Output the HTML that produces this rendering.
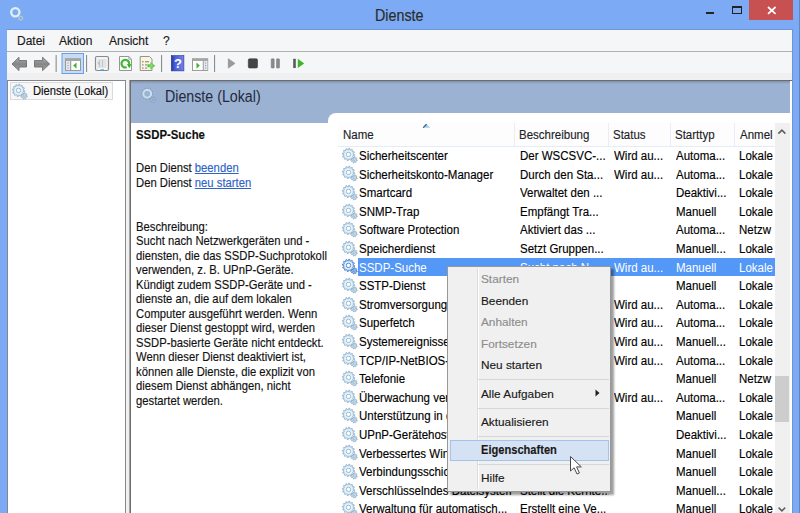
<!DOCTYPE html>
<html><head><meta charset="utf-8">
<style>
*{box-sizing:border-box}
html,body{margin:0;padding:0}
body{width:800px;height:513px;overflow:hidden;position:relative;background:#7caaf5;font-family:"Liberation Sans",sans-serif;font-size:12px;color:#000}
.a{position:absolute}
.t{position:absolute;white-space:nowrap;line-height:14px;-webkit-text-stroke:0.15px currentColor}
#title{left:375px;top:6.5px;font-size:15.8px;line-height:18px;color:#2b2b2b;transform-origin:0 0;transform:scaleX(0.905)}
#client{left:7px;top:29px;width:785px;height:484px;background:#f0f0f0}
#menubar{left:7px;top:29px;width:785px;height:22px;background:#f5f6f7;border-top:1px solid #6e95d8}
#menusep{left:7px;top:51px;width:785px;height:1px;background:#b0b0b0}
#toolbar{left:7px;top:52px;width:785px;height:21px;background:#f5f6f7}
.mi{top:33.5px;font-size:12px;color:#1a1a1a}
.tsep{width:1px;height:17px;top:55px;background:#8a8a8a}
#lp{left:7px;top:80px;width:119px;height:440px;background:#fff;border:1px solid #828790}
#rp{left:130px;top:80px;width:662px;height:440px;background:#fff;border-left:1px solid #6c6c6c;border-top:1px solid #6c6c6c}
#hdr{left:131px;top:81px;width:659px;height:42px;background:#9cb2d3}
#tab{left:328px;top:113px;width:462px;height:20px;background:#fff;border-top-left-radius:8px}
.desc{left:136px;font-size:12.6px;color:#111;transform-origin:0 0;transform:scaleX(0.894)}
.link{color:#2e63c7;text-decoration:underline}
#lh{left:338px;top:123px;width:437px;height:24px;background:#fdfdfd;border-bottom:1px solid #e4ecf6}
.csep{top:123px;width:1px;height:23px;background:#e8eef8}
.hc{top:127.6px;font-size:12.5px;color:#1e1e2a;transform-origin:0 0;transform:scaleX(0.92)}
.row{left:338px;width:437px;height:18.5px}
.rc{font-size:12.5px;color:#000;transform-origin:0 0;transform:scaleX(0.92)}
#sb{left:775px;top:123px;width:15px;height:390px;background:#f0f0f0}
#thumb{left:775px;top:376px;width:14px;height:46px;background:#cdcdcd}
#ctx{left:447px;top:266px;width:164px;height:226px;background:#f0f0f0;border:1px solid #979797;box-shadow:3px 3px 2px rgba(0,0,0,0.38)}
.ci{left:481px;font-size:11.8px;color:#1a1a1a;letter-spacing:0}
.dis{color:#8d8d8d}
.msep{left:478px;width:131px;height:1px;background:#d7d7d7}
</style></head>
<body>
<!-- title bar -->
<svg class="a" style="left:0;top:0" width="30" height="26" viewBox="0 0 30 26">
 <path d="M23.10 18.20L23.79 18.38L23.63 19.18L22.92 19.08L22.43 19.83L22.79 20.44L22.11 20.90L21.68 20.32L20.80 20.50L20.62 21.19L19.82 21.03L19.92 20.32L19.17 19.83L18.56 20.19L18.10 19.51L18.68 19.08L18.50 18.20L17.81 18.02L17.97 17.22L18.68 17.32L19.17 16.57L18.81 15.96L19.49 15.50L19.92 16.08L20.80 15.90L20.98 15.21L21.78 15.37L21.68 16.08L22.43 16.57L23.04 16.21L23.50 16.89L22.92 17.32ZM21.90 18.20A1.1 1.1 0 1 0 19.70 18.20A1.1 1.1 0 1 0 21.90 18.20Z" fill="#c6dcee" stroke="#8fa9c8" stroke-width="0.6" fill-rule="evenodd" opacity="0.9"/>
 <path d="M20.40 12.30L21.50 12.54L21.35 13.67L20.23 13.62L19.72 14.85L20.54 15.61L19.85 16.51L18.91 15.91L17.85 16.72L18.19 17.79L17.14 18.22L16.62 17.23L15.30 17.40L15.06 18.50L13.93 18.35L13.98 17.23L12.75 16.72L11.99 17.54L11.09 16.85L11.69 15.91L10.88 14.85L9.81 15.19L9.38 14.14L10.37 13.62L10.20 12.30L9.10 12.06L9.25 10.93L10.37 10.98L10.88 9.75L10.06 8.99L10.75 8.09L11.69 8.69L12.75 7.88L12.41 6.81L13.46 6.38L13.98 7.37L15.30 7.20L15.54 6.10L16.67 6.25L16.62 7.37L17.85 7.88L18.61 7.06L19.51 7.75L18.91 8.69L19.72 9.75L20.79 9.41L21.22 10.46L20.23 10.98ZM18.30 12.30A3.0 3.0 0 1 0 12.30 12.30A3.0 3.0 0 1 0 18.30 12.30Z" fill="#94aed0" fill-rule="evenodd"/>
 <circle cx="15.3" cy="12.3" r="4.1" fill="none" stroke="#dcf0fa" stroke-width="2.3"/>
</svg>
<div id="title" class="t">Dienste</div>
<div class="a" style="left:706px;top:11.5px;width:8px;height:2px;background:#222"></div>
<div class="a" style="left:731.5px;top:6px;width:10px;height:8px;border:1px solid #222;border-top-width:2px"></div>
<div class="a" style="left:749px;top:0;width:44px;height:19.5px;background:#c75050"></div>
<svg class="a" style="left:760px;top:0" width="24" height="20" viewBox="760 0 24 20"><path d="M768 7L775.6 13.8M775.6 7L768 13.8" stroke="#fff" stroke-width="1.7"/></svg>

<div class="a" style="left:799px;top:0;width:1px;height:513px;background:#5f86c6"></div>
<div class="a" style="left:792px;top:29px;width:1px;height:484px;background:#6b94d8"></div>
<div id="client" class="a"></div>
<div id="menubar" class="a"></div>
<div id="menusep" class="a"></div>
<div id="toolbar" class="a"></div>
<div class="t mi" style="left:17px">Datei</div>
<div class="t mi" style="left:59px">Aktion</div>
<div class="t mi" style="left:109px">Ansicht</div>
<div class="t mi" style="left:163px">?</div>

<svg class="a" style="left:0;top:0" width="320" height="80" viewBox="0 0 320 80">
 <defs>
  <linearGradient id="ga" x1="0" y1="0" x2="0" y2="1"><stop offset="0" stop-color="#b8b8b8"/><stop offset="0.5" stop-color="#858585"/><stop offset="1" stop-color="#a8a8a8"/></linearGradient>
  <linearGradient id="gh" x1="0" y1="0" x2="1" y2="0"><stop offset="0" stop-color="#2536a0"/><stop offset="0.3" stop-color="#4a5fd8"/><stop offset="1" stop-color="#6f82e6"/></linearGradient>
  <radialGradient id="gg" cx="0.5" cy="0.5" r="0.5"><stop offset="0" stop-color="#8ee37a"/><stop offset="1" stop-color="#3cb82e"/></radialGradient>
 </defs>
 <!-- back/forward -->
 <path d="M12 64L19 57.3L19 60.6L26.5 60.6L26.5 67L19 67L19 70.6Z" fill="url(#ga)" stroke="#6c6c6c" stroke-width="0.9" stroke-linejoin="round"/>
 <path d="M49.6 64L42.6 57.3L42.6 60.6L34.5 60.6L34.5 67L42.6 67L42.6 70.6Z" fill="url(#ga)" stroke="#6c6c6c" stroke-width="0.9" stroke-linejoin="round"/>
 <rect x="55.6" y="55" width="1.1" height="17" fill="#8c8c8c"/>
 <!-- pressed button -->
 <rect x="62" y="53.5" width="21.5" height="20" fill="#c6dcf5" stroke="#6a9ee6" stroke-width="1"/>
 <rect x="65.5" y="58.8" width="15" height="11.6" fill="#fff" stroke="#8e8e8e" stroke-width="0.9"/>
 <rect x="65.5" y="58.8" width="15" height="2.2" fill="#a6a6a6"/>
 <rect x="66" y="61" width="4.2" height="9" fill="#e8e8e8"/>
 <rect x="70.2" y="61" width="1" height="9.4" fill="#8a8a8a"/>
 <rect x="67.4" y="62.5" width="1.2" height="1" fill="#7a9bd0"/><rect x="67.4" y="65" width="1.2" height="1" fill="#7a9bd0"/><rect x="67.4" y="67.5" width="1.2" height="1" fill="#7a9bd0"/>
 <path d="M76.5 62.5L73.2 65.6L76.5 68.8Z" fill="#3fb02f"/>
 <rect x="86" y="55" width="1.1" height="17" fill="#8c8c8c"/>
 <!-- properties -->
 <rect x="95.5" y="56.5" width="13" height="14" rx="1.5" fill="#f4f4f4" stroke="#8a8a8a" stroke-width="1.2"/>
 <rect x="97.5" y="59" width="9" height="9" fill="#e4e4e4"/>
 <rect x="99" y="60" width="1" height="7" fill="#c4c4c4"/><rect x="102" y="60" width="1" height="7" fill="#c4c4c4"/>
 <rect x="97.8" y="62" width="1.2" height="2.5" fill="#8fd0f4"/>
 <rect x="100.5" y="69.3" width="3.5" height="1.3" fill="#36aee8"/>
 <!-- refresh doc -->
 <path d="M119.5 56.5L128.8 56.5L131.5 59.2L131.5 70.5L119.5 70.5Z" fill="#fdfdfd" stroke="#8a8a8a" stroke-width="0.9"/>
 <path d="M128.8 56.5L128.8 59.2L131.5 59.2" fill="none" stroke="#9a9a9a" stroke-width="0.8"/>
  <path d="M126.7 67.2A3.8 3.8 0 1 1 129.1 64.2" fill="none" stroke="url(#gg)" stroke-width="2.3"/>
 <path d="M131.4 64.2L126.9 64.0L129.3 68.2Z" fill="#2fae1f"/>
 <!-- export list -->
 <path d="M140.2 56.5L149.5 56.5L152 59L152 70.5L140.2 70.5Z" fill="#fbf6d9" stroke="#8a8a8a" stroke-width="0.9"/>
 <rect x="142" y="61" width="1.6" height="1.4" fill="#999"/><rect x="145" y="61" width="4" height="1.4" fill="#9a9ab0"/>
 <rect x="142" y="64.2" width="1.6" height="1.4" fill="#999"/><rect x="145" y="64.2" width="2" height="1.4" fill="#9a9ab0"/>
 <rect x="142" y="67.4" width="1.6" height="1.4" fill="#999"/><rect x="145" y="67.4" width="2" height="1.4" fill="#9a9ab0"/>
 <path d="M147.5 64.2L150.5 64.2L150.5 62L155.2 65.7L150.5 69.4L150.5 67.2L147.5 67.2Z" fill="url(#gg)"/>
 <rect x="161" y="55" width="1.1" height="17" fill="#8c8c8c"/>
 <!-- help -->
 <rect x="171.3" y="55.6" width="12.6" height="15.3" fill="url(#gh)" stroke="#2a3490" stroke-width="0.6"/>
 <text x="177.9" y="68.4" font-family="Liberation Sans" font-size="13" font-weight="bold" fill="#fff" text-anchor="middle">?</text>
 <!-- action pane -->
 <rect x="192.5" y="58.8" width="15.2" height="11.6" fill="#fff" stroke="#8e8e8e" stroke-width="0.9"/>
 <rect x="192.5" y="58.8" width="15.2" height="2.2" fill="#a6a6a6"/>
 <rect x="202.8" y="61" width="1" height="9.4" fill="#8a8a8a"/>
 <rect x="203.8" y="61" width="3.6" height="9" fill="#e8e8e8"/>
 <rect x="205" y="62.5" width="1.2" height="1" fill="#7a9bd0"/><rect x="205" y="65" width="1.2" height="1" fill="#7a9bd0"/><rect x="205" y="67.5" width="1.2" height="1" fill="#7a9bd0"/>
 <path d="M196.5 62.5L199.8 65.6L196.5 68.8Z" fill="#3fb02f"/>
 <rect x="214" y="55" width="1.1" height="17" fill="#8c8c8c"/>
 <!-- play/stop/pause/restart -->
 <path d="M228.3 58.7L235 63.4L228.3 68.1Z" fill="#9a9a9a" stroke="#8a8a8a" stroke-width="0.6"/>
 <rect x="248.3" y="58.8" width="9.2" height="9.2" rx="1.3" fill="#444" stroke="#3a3a3a" stroke-width="0.6"/>
 <rect x="271.2" y="58.8" width="3" height="9.2" rx="0.6" fill="#8a8a8a" stroke="#777" stroke-width="0.5"/>
 <rect x="276.5" y="58.8" width="3" height="9.2" rx="0.6" fill="#8a8a8a" stroke="#777" stroke-width="0.5"/>
 <rect x="293.2" y="58.8" width="2.6" height="9.2" rx="0.5" fill="#5a5a5a"/>
 <path d="M297.8 58.7L304.2 63.4L297.8 68.1Z" fill="#3cb52b"/>
</svg>


<!-- left pane -->
<div id="lp" class="a"></div>
<div class="a" style="left:10px;top:82px;width:102.5px;height:18px;border:1px solid #dadada;background:#f7f7f7"></div>
<svg class="a" style="left:12px;top:82.5px" width="16" height="17" viewBox="0 0 16 17"><path d="M14.50 12.80L15.29 12.98L15.13 13.82L14.32 13.68L13.83 14.43L14.26 15.12L13.55 15.59L13.08 14.92L12.20 15.10L12.02 15.89L11.18 15.73L11.32 14.92L10.57 14.43L9.88 14.86L9.41 14.15L10.08 13.68L9.90 12.80L9.11 12.62L9.27 11.78L10.08 11.92L10.57 11.17L10.14 10.48L10.85 10.01L11.32 10.68L12.20 10.50L12.38 9.71L13.22 9.87L13.08 10.68L13.83 11.17L14.52 10.74L14.99 11.45L14.32 11.92ZM13.20 12.80A1.0 1.0 0 1 0 11.20 12.80A1.0 1.0 0 1 0 13.20 12.80Z" fill="#cce8f7" stroke="#86a3c0" stroke-width="0.7" fill-rule="evenodd"/><path d="M11.40 7.40L12.70 7.64L12.55 8.77L11.23 8.67L10.74 9.85L11.74 10.71L11.05 11.61L9.96 10.86L8.95 11.64L9.39 12.89L8.34 13.32L7.77 12.13L6.50 12.30L6.26 13.60L5.13 13.45L5.23 12.13L4.05 11.64L3.19 12.64L2.29 11.95L3.04 10.86L2.26 9.85L1.01 10.29L0.58 9.24L1.77 8.67L1.60 7.40L0.30 7.16L0.45 6.03L1.77 6.13L2.26 4.95L1.26 4.09L1.95 3.19L3.04 3.94L4.05 3.16L3.61 1.91L4.66 1.48L5.23 2.67L6.50 2.50L6.74 1.20L7.87 1.35L7.77 2.67L8.95 3.16L9.81 2.16L10.71 2.85L9.96 3.94L10.74 4.95L11.99 4.51L12.42 5.56L11.23 6.13ZM8.70 7.40A2.2 2.2 0 1 0 4.30 7.40A2.2 2.2 0 1 0 8.70 7.40Z" fill="#cce8f7" stroke="#86a3c0" stroke-width="0.7" fill-rule="evenodd"/><circle cx="6.5" cy="7.4" r="3.4" fill="none" stroke="#e8f5fc" stroke-width="1.2"/></svg>
<div class="t" style="left:32.5px;top:83.5px;font-size:12.3px;color:#111;transform-origin:0 0;transform:scaleX(0.91)">Dienste (Lokal)</div>

<!-- right pane -->
<div class="a" style="left:126px;top:80px;width:4px;height:433px;background:linear-gradient(to right,#f4f4f4 0,#eeeeee 2.9px,#a6a6a6 3px,#a6a6a6 4px)"></div>
<div id="rp" class="a"></div>
<div id="hdr" class="a"></div>
<div class="a" style="left:131px;top:81px;width:659px;height:3px;background:linear-gradient(#7f91ad,#9cb2d3)"></div>
<div id="tab" class="a"></div>
<svg class="a" style="left:130px;top:80px" width="30" height="26" viewBox="130 80 30 26">
 <path d="M155.10 99.80L155.79 99.97L155.64 100.75L154.93 100.64L154.46 101.36L154.83 101.97L154.17 102.41L153.74 101.83L152.90 102.00L152.73 102.69L151.95 102.54L152.06 101.83L151.34 101.36L150.73 101.73L150.29 101.07L150.87 100.64L150.70 99.80L150.01 99.63L150.16 98.85L150.87 98.96L151.34 98.24L150.97 97.63L151.63 97.19L152.06 97.77L152.90 97.60L153.07 96.91L153.85 97.06L153.74 97.77L154.46 98.24L155.07 97.87L155.51 98.53L154.93 98.96ZM153.90 99.80A1.0 1.0 0 1 0 151.90 99.80A1.0 1.0 0 1 0 153.90 99.80Z" fill="#b3c8de" stroke="#7f93b0" stroke-width="0.6" fill-rule="evenodd" opacity="0.85"/>
 <path d="M152.20 93.70L153.20 93.94L153.05 95.02L152.03 94.99L151.53 96.20L152.27 96.90L151.61 97.77L150.74 97.24L149.70 98.03L149.99 99.01L148.98 99.43L148.49 98.53L147.20 98.70L146.96 99.70L145.88 99.55L145.91 98.53L144.70 98.03L144.00 98.77L143.13 98.11L143.66 97.24L142.87 96.20L141.89 96.49L141.47 95.48L142.37 94.99L142.20 93.70L141.20 93.46L141.35 92.38L142.37 92.41L142.87 91.20L142.13 90.50L142.79 89.63L143.66 90.16L144.70 89.37L144.41 88.39L145.42 87.97L145.91 88.87L147.20 88.70L147.44 87.70L148.52 87.85L148.49 88.87L149.70 89.37L150.40 88.63L151.27 89.29L150.74 90.16L151.53 91.20L152.51 90.91L152.93 91.92L152.03 92.41ZM149.90 93.70A2.7 2.7 0 1 0 144.50 93.70A2.7 2.7 0 1 0 149.90 93.70Z" fill="#7d93b4" fill-rule="evenodd"/>
 <circle cx="147.2" cy="93.7" r="3.9" fill="none" stroke="#c4e0ee" stroke-width="2.3"/>
</svg>
<div class="t" style="left:165px;top:88px;font-size:15.8px;line-height:18px;color:#1f2a3c;-webkit-text-stroke:0;transform-origin:0 0;transform:scaleX(0.9)">Dienste (Lokal)</div>

<!-- description -->
<div class="t desc" style="top:128.3px;font-weight:bold;font-size:12.5px;transform:scaleX(0.91)">SSDP-Suche</div>


<div class="t desc" style="top:160.5px">Den Dienst <span class="link">beenden</span></div>
<div class="t desc" style="top:175.8px">Den Dienst <span class="link">neu starten</span></div>
<div class="t desc" style="top:219.60px">Beschreibung:</div>
<div class="t desc" style="top:234.13px">Sucht nach Netzwerkgeräten und -</div>
<div class="t desc" style="top:248.66px">diensten, die das SSDP-Suchprotokoll</div>
<div class="t desc" style="top:263.19px">verwenden, z. B. UPnP-Geräte.</div>
<div class="t desc" style="top:277.72px">Kündigt zudem SSDP-Geräte und -</div>
<div class="t desc" style="top:292.25px">dienste an, die auf dem lokalen</div>
<div class="t desc" style="top:306.78px">Computer ausgeführt werden. Wenn</div>
<div class="t desc" style="top:321.31px">dieser Dienst gestoppt wird, werden</div>
<div class="t desc" style="top:335.84px">SSDP-basierte Geräte nicht entdeckt.</div>
<div class="t desc" style="top:350.37px">Wenn dieser Dienst deaktiviert ist,</div>
<div class="t desc" style="top:364.90px">können alle Dienste, die explizit von</div>
<div class="t desc" style="top:379.43px">diesem Dienst abhängen, nicht</div>
<div class="t desc" style="top:393.96px">gestartet werden.</div>

<!-- list header -->
<div id="lh" class="a"></div>
<div class="a csep" style="left:513.5px"></div>
<div class="a csep" style="left:607.5px"></div>
<div class="a csep" style="left:669.5px"></div>
<div class="a csep" style="left:734px"></div>
<svg class="a" style="left:422px;top:123px" width="9" height="6" viewBox="422 123 9 6"><path d="M423 127.8L426.5 124L430.2 127.8Z" fill="#9fcdf0"/><path d="M423.2 127.6L426.5 124.2" stroke="#2f4b6e" stroke-width="1.1"/></svg>
<div class="t hc" style="left:343.4px">Name</div>
<div class="t hc" style="left:519.4px">Beschreibung</div>
<div class="t hc" style="left:613.4px">Status</div>
<div class="t hc" style="left:675.3px">Starttyp</div>
<div class="t hc" style="left:739.7px">Anmel</div>

<svg class="a" style="left:342px;top:146.8px" width="16" height="17" viewBox="0 0 16 17"><path d="M14.50 12.80L15.29 12.98L15.13 13.82L14.32 13.68L13.83 14.43L14.26 15.12L13.55 15.59L13.08 14.92L12.20 15.10L12.02 15.89L11.18 15.73L11.32 14.92L10.57 14.43L9.88 14.86L9.41 14.15L10.08 13.68L9.90 12.80L9.11 12.62L9.27 11.78L10.08 11.92L10.57 11.17L10.14 10.48L10.85 10.01L11.32 10.68L12.20 10.50L12.38 9.71L13.22 9.87L13.08 10.68L13.83 11.17L14.52 10.74L14.99 11.45L14.32 11.92ZM13.20 12.80A1.0 1.0 0 1 0 11.20 12.80A1.0 1.0 0 1 0 13.20 12.80Z" fill="#cce8f7" stroke="#86a3c0" stroke-width="0.7" fill-rule="evenodd"/><path d="M11.40 7.40L12.70 7.64L12.55 8.77L11.23 8.67L10.74 9.85L11.74 10.71L11.05 11.61L9.96 10.86L8.95 11.64L9.39 12.89L8.34 13.32L7.77 12.13L6.50 12.30L6.26 13.60L5.13 13.45L5.23 12.13L4.05 11.64L3.19 12.64L2.29 11.95L3.04 10.86L2.26 9.85L1.01 10.29L0.58 9.24L1.77 8.67L1.60 7.40L0.30 7.16L0.45 6.03L1.77 6.13L2.26 4.95L1.26 4.09L1.95 3.19L3.04 3.94L4.05 3.16L3.61 1.91L4.66 1.48L5.23 2.67L6.50 2.50L6.74 1.20L7.87 1.35L7.77 2.67L8.95 3.16L9.81 2.16L10.71 2.85L9.96 3.94L10.74 4.95L11.99 4.51L12.42 5.56L11.23 6.13ZM8.70 7.40A2.2 2.2 0 1 0 4.30 7.40A2.2 2.2 0 1 0 8.70 7.40Z" fill="#cce8f7" stroke="#86a3c0" stroke-width="0.7" fill-rule="evenodd"/><circle cx="6.5" cy="7.4" r="3.4" fill="none" stroke="#e8f5fc" stroke-width="1.2"/></svg>
<div class="t rc" style="left:359.2px;top:149.0px;color:#000;width:167.4px;overflow:hidden">Sicherheitscenter</div>
<div class="t rc" style="left:519.6px;top:149.0px;color:#000;width:95.7px;overflow:hidden">Der WSCSVC-...</div>
<div class="t rc" style="left:614px;top:149.0px;color:#000;width:60.9px;overflow:hidden">Wird au...</div>
<div class="t rc" style="left:676px;top:149.0px;color:#000;width:63.0px;overflow:hidden">Automa...</div>
<div class="t rc" style="left:739.4px;top:149.0px;color:#000;width:37.0px;overflow:hidden">Lokale</div>
<svg class="a" style="left:342px;top:165.4px" width="16" height="17" viewBox="0 0 16 17"><path d="M14.50 12.80L15.29 12.98L15.13 13.82L14.32 13.68L13.83 14.43L14.26 15.12L13.55 15.59L13.08 14.92L12.20 15.10L12.02 15.89L11.18 15.73L11.32 14.92L10.57 14.43L9.88 14.86L9.41 14.15L10.08 13.68L9.90 12.80L9.11 12.62L9.27 11.78L10.08 11.92L10.57 11.17L10.14 10.48L10.85 10.01L11.32 10.68L12.20 10.50L12.38 9.71L13.22 9.87L13.08 10.68L13.83 11.17L14.52 10.74L14.99 11.45L14.32 11.92ZM13.20 12.80A1.0 1.0 0 1 0 11.20 12.80A1.0 1.0 0 1 0 13.20 12.80Z" fill="#cce8f7" stroke="#86a3c0" stroke-width="0.7" fill-rule="evenodd"/><path d="M11.40 7.40L12.70 7.64L12.55 8.77L11.23 8.67L10.74 9.85L11.74 10.71L11.05 11.61L9.96 10.86L8.95 11.64L9.39 12.89L8.34 13.32L7.77 12.13L6.50 12.30L6.26 13.60L5.13 13.45L5.23 12.13L4.05 11.64L3.19 12.64L2.29 11.95L3.04 10.86L2.26 9.85L1.01 10.29L0.58 9.24L1.77 8.67L1.60 7.40L0.30 7.16L0.45 6.03L1.77 6.13L2.26 4.95L1.26 4.09L1.95 3.19L3.04 3.94L4.05 3.16L3.61 1.91L4.66 1.48L5.23 2.67L6.50 2.50L6.74 1.20L7.87 1.35L7.77 2.67L8.95 3.16L9.81 2.16L10.71 2.85L9.96 3.94L10.74 4.95L11.99 4.51L12.42 5.56L11.23 6.13ZM8.70 7.40A2.2 2.2 0 1 0 4.30 7.40A2.2 2.2 0 1 0 8.70 7.40Z" fill="#cce8f7" stroke="#86a3c0" stroke-width="0.7" fill-rule="evenodd"/><circle cx="6.5" cy="7.4" r="3.4" fill="none" stroke="#e8f5fc" stroke-width="1.2"/></svg>
<div class="t rc" style="left:359.2px;top:167.6px;color:#000;width:167.4px;overflow:hidden">Sicherheitskonto-Manager</div>
<div class="t rc" style="left:519.6px;top:167.6px;color:#000;width:95.7px;overflow:hidden">Durch den Sta...</div>
<div class="t rc" style="left:614px;top:167.6px;color:#000;width:60.9px;overflow:hidden">Wird au...</div>
<div class="t rc" style="left:676px;top:167.6px;color:#000;width:63.0px;overflow:hidden">Automa...</div>
<div class="t rc" style="left:739.4px;top:167.6px;color:#000;width:37.0px;overflow:hidden">Lokale</div>
<svg class="a" style="left:342px;top:184.0px" width="16" height="17" viewBox="0 0 16 17"><path d="M14.50 12.80L15.29 12.98L15.13 13.82L14.32 13.68L13.83 14.43L14.26 15.12L13.55 15.59L13.08 14.92L12.20 15.10L12.02 15.89L11.18 15.73L11.32 14.92L10.57 14.43L9.88 14.86L9.41 14.15L10.08 13.68L9.90 12.80L9.11 12.62L9.27 11.78L10.08 11.92L10.57 11.17L10.14 10.48L10.85 10.01L11.32 10.68L12.20 10.50L12.38 9.71L13.22 9.87L13.08 10.68L13.83 11.17L14.52 10.74L14.99 11.45L14.32 11.92ZM13.20 12.80A1.0 1.0 0 1 0 11.20 12.80A1.0 1.0 0 1 0 13.20 12.80Z" fill="#cce8f7" stroke="#86a3c0" stroke-width="0.7" fill-rule="evenodd"/><path d="M11.40 7.40L12.70 7.64L12.55 8.77L11.23 8.67L10.74 9.85L11.74 10.71L11.05 11.61L9.96 10.86L8.95 11.64L9.39 12.89L8.34 13.32L7.77 12.13L6.50 12.30L6.26 13.60L5.13 13.45L5.23 12.13L4.05 11.64L3.19 12.64L2.29 11.95L3.04 10.86L2.26 9.85L1.01 10.29L0.58 9.24L1.77 8.67L1.60 7.40L0.30 7.16L0.45 6.03L1.77 6.13L2.26 4.95L1.26 4.09L1.95 3.19L3.04 3.94L4.05 3.16L3.61 1.91L4.66 1.48L5.23 2.67L6.50 2.50L6.74 1.20L7.87 1.35L7.77 2.67L8.95 3.16L9.81 2.16L10.71 2.85L9.96 3.94L10.74 4.95L11.99 4.51L12.42 5.56L11.23 6.13ZM8.70 7.40A2.2 2.2 0 1 0 4.30 7.40A2.2 2.2 0 1 0 8.70 7.40Z" fill="#cce8f7" stroke="#86a3c0" stroke-width="0.7" fill-rule="evenodd"/><circle cx="6.5" cy="7.4" r="3.4" fill="none" stroke="#e8f5fc" stroke-width="1.2"/></svg>
<div class="t rc" style="left:359.2px;top:186.2px;color:#000;width:167.4px;overflow:hidden">Smartcard</div>
<div class="t rc" style="left:519.6px;top:186.2px;color:#000;width:95.7px;overflow:hidden">Verwaltet den ...</div>
<div class="t rc" style="left:676px;top:186.2px;color:#000;width:63.0px;overflow:hidden">Deaktivi...</div>
<div class="t rc" style="left:739.4px;top:186.2px;color:#000;width:37.0px;overflow:hidden">Lokale</div>
<svg class="a" style="left:342px;top:202.60000000000002px" width="16" height="17" viewBox="0 0 16 17"><path d="M14.50 12.80L15.29 12.98L15.13 13.82L14.32 13.68L13.83 14.43L14.26 15.12L13.55 15.59L13.08 14.92L12.20 15.10L12.02 15.89L11.18 15.73L11.32 14.92L10.57 14.43L9.88 14.86L9.41 14.15L10.08 13.68L9.90 12.80L9.11 12.62L9.27 11.78L10.08 11.92L10.57 11.17L10.14 10.48L10.85 10.01L11.32 10.68L12.20 10.50L12.38 9.71L13.22 9.87L13.08 10.68L13.83 11.17L14.52 10.74L14.99 11.45L14.32 11.92ZM13.20 12.80A1.0 1.0 0 1 0 11.20 12.80A1.0 1.0 0 1 0 13.20 12.80Z" fill="#cce8f7" stroke="#86a3c0" stroke-width="0.7" fill-rule="evenodd"/><path d="M11.40 7.40L12.70 7.64L12.55 8.77L11.23 8.67L10.74 9.85L11.74 10.71L11.05 11.61L9.96 10.86L8.95 11.64L9.39 12.89L8.34 13.32L7.77 12.13L6.50 12.30L6.26 13.60L5.13 13.45L5.23 12.13L4.05 11.64L3.19 12.64L2.29 11.95L3.04 10.86L2.26 9.85L1.01 10.29L0.58 9.24L1.77 8.67L1.60 7.40L0.30 7.16L0.45 6.03L1.77 6.13L2.26 4.95L1.26 4.09L1.95 3.19L3.04 3.94L4.05 3.16L3.61 1.91L4.66 1.48L5.23 2.67L6.50 2.50L6.74 1.20L7.87 1.35L7.77 2.67L8.95 3.16L9.81 2.16L10.71 2.85L9.96 3.94L10.74 4.95L11.99 4.51L12.42 5.56L11.23 6.13ZM8.70 7.40A2.2 2.2 0 1 0 4.30 7.40A2.2 2.2 0 1 0 8.70 7.40Z" fill="#cce8f7" stroke="#86a3c0" stroke-width="0.7" fill-rule="evenodd"/><circle cx="6.5" cy="7.4" r="3.4" fill="none" stroke="#e8f5fc" stroke-width="1.2"/></svg>
<div class="t rc" style="left:359.2px;top:204.8px;color:#000;width:167.4px;overflow:hidden">SNMP-Trap</div>
<div class="t rc" style="left:519.6px;top:204.8px;color:#000;width:95.7px;overflow:hidden">Empfängt Tra...</div>
<div class="t rc" style="left:676px;top:204.8px;color:#000;width:63.0px;overflow:hidden">Manuell</div>
<div class="t rc" style="left:739.4px;top:204.8px;color:#000;width:37.0px;overflow:hidden">Lokale</div>
<svg class="a" style="left:342px;top:221.20000000000002px" width="16" height="17" viewBox="0 0 16 17"><path d="M14.50 12.80L15.29 12.98L15.13 13.82L14.32 13.68L13.83 14.43L14.26 15.12L13.55 15.59L13.08 14.92L12.20 15.10L12.02 15.89L11.18 15.73L11.32 14.92L10.57 14.43L9.88 14.86L9.41 14.15L10.08 13.68L9.90 12.80L9.11 12.62L9.27 11.78L10.08 11.92L10.57 11.17L10.14 10.48L10.85 10.01L11.32 10.68L12.20 10.50L12.38 9.71L13.22 9.87L13.08 10.68L13.83 11.17L14.52 10.74L14.99 11.45L14.32 11.92ZM13.20 12.80A1.0 1.0 0 1 0 11.20 12.80A1.0 1.0 0 1 0 13.20 12.80Z" fill="#cce8f7" stroke="#86a3c0" stroke-width="0.7" fill-rule="evenodd"/><path d="M11.40 7.40L12.70 7.64L12.55 8.77L11.23 8.67L10.74 9.85L11.74 10.71L11.05 11.61L9.96 10.86L8.95 11.64L9.39 12.89L8.34 13.32L7.77 12.13L6.50 12.30L6.26 13.60L5.13 13.45L5.23 12.13L4.05 11.64L3.19 12.64L2.29 11.95L3.04 10.86L2.26 9.85L1.01 10.29L0.58 9.24L1.77 8.67L1.60 7.40L0.30 7.16L0.45 6.03L1.77 6.13L2.26 4.95L1.26 4.09L1.95 3.19L3.04 3.94L4.05 3.16L3.61 1.91L4.66 1.48L5.23 2.67L6.50 2.50L6.74 1.20L7.87 1.35L7.77 2.67L8.95 3.16L9.81 2.16L10.71 2.85L9.96 3.94L10.74 4.95L11.99 4.51L12.42 5.56L11.23 6.13ZM8.70 7.40A2.2 2.2 0 1 0 4.30 7.40A2.2 2.2 0 1 0 8.70 7.40Z" fill="#cce8f7" stroke="#86a3c0" stroke-width="0.7" fill-rule="evenodd"/><circle cx="6.5" cy="7.4" r="3.4" fill="none" stroke="#e8f5fc" stroke-width="1.2"/></svg>
<div class="t rc" style="left:359.2px;top:223.4px;color:#000;width:167.4px;overflow:hidden">Software Protection</div>
<div class="t rc" style="left:519.6px;top:223.4px;color:#000;width:95.7px;overflow:hidden">Aktiviert das ...</div>
<div class="t rc" style="left:676px;top:223.4px;color:#000;width:63.0px;overflow:hidden">Automa...</div>
<div class="t rc" style="left:739.4px;top:223.4px;color:#000;width:37.0px;overflow:hidden">Netzw</div>
<svg class="a" style="left:342px;top:239.8px" width="16" height="17" viewBox="0 0 16 17"><path d="M14.50 12.80L15.29 12.98L15.13 13.82L14.32 13.68L13.83 14.43L14.26 15.12L13.55 15.59L13.08 14.92L12.20 15.10L12.02 15.89L11.18 15.73L11.32 14.92L10.57 14.43L9.88 14.86L9.41 14.15L10.08 13.68L9.90 12.80L9.11 12.62L9.27 11.78L10.08 11.92L10.57 11.17L10.14 10.48L10.85 10.01L11.32 10.68L12.20 10.50L12.38 9.71L13.22 9.87L13.08 10.68L13.83 11.17L14.52 10.74L14.99 11.45L14.32 11.92ZM13.20 12.80A1.0 1.0 0 1 0 11.20 12.80A1.0 1.0 0 1 0 13.20 12.80Z" fill="#cce8f7" stroke="#86a3c0" stroke-width="0.7" fill-rule="evenodd"/><path d="M11.40 7.40L12.70 7.64L12.55 8.77L11.23 8.67L10.74 9.85L11.74 10.71L11.05 11.61L9.96 10.86L8.95 11.64L9.39 12.89L8.34 13.32L7.77 12.13L6.50 12.30L6.26 13.60L5.13 13.45L5.23 12.13L4.05 11.64L3.19 12.64L2.29 11.95L3.04 10.86L2.26 9.85L1.01 10.29L0.58 9.24L1.77 8.67L1.60 7.40L0.30 7.16L0.45 6.03L1.77 6.13L2.26 4.95L1.26 4.09L1.95 3.19L3.04 3.94L4.05 3.16L3.61 1.91L4.66 1.48L5.23 2.67L6.50 2.50L6.74 1.20L7.87 1.35L7.77 2.67L8.95 3.16L9.81 2.16L10.71 2.85L9.96 3.94L10.74 4.95L11.99 4.51L12.42 5.56L11.23 6.13ZM8.70 7.40A2.2 2.2 0 1 0 4.30 7.40A2.2 2.2 0 1 0 8.70 7.40Z" fill="#cce8f7" stroke="#86a3c0" stroke-width="0.7" fill-rule="evenodd"/><circle cx="6.5" cy="7.4" r="3.4" fill="none" stroke="#e8f5fc" stroke-width="1.2"/></svg>
<div class="t rc" style="left:359.2px;top:242.0px;color:#000;width:167.4px;overflow:hidden">Speicherdienst</div>
<div class="t rc" style="left:519.6px;top:242.0px;color:#000;width:95.7px;overflow:hidden">Setzt Gruppen...</div>
<div class="t rc" style="left:676px;top:242.0px;color:#000;width:63.0px;overflow:hidden">Manuell...</div>
<div class="t rc" style="left:739.4px;top:242.0px;color:#000;width:37.0px;overflow:hidden">Lokale</div>
<div class="a" style="left:357.5px;top:258.4px;width:417.5px;height:18px;background:#5498f7"></div>
<svg class="a" style="left:342px;top:258.40000000000003px" width="16" height="17" viewBox="0 0 16 17"><path d="M14.50 12.80L15.29 12.98L15.13 13.82L14.32 13.68L13.83 14.43L14.26 15.12L13.55 15.59L13.08 14.92L12.20 15.10L12.02 15.89L11.18 15.73L11.32 14.92L10.57 14.43L9.88 14.86L9.41 14.15L10.08 13.68L9.90 12.80L9.11 12.62L9.27 11.78L10.08 11.92L10.57 11.17L10.14 10.48L10.85 10.01L11.32 10.68L12.20 10.50L12.38 9.71L13.22 9.87L13.08 10.68L13.83 11.17L14.52 10.74L14.99 11.45L14.32 11.92ZM13.20 12.80A1.0 1.0 0 1 0 11.20 12.80A1.0 1.0 0 1 0 13.20 12.80Z" fill="#a9cdf2" stroke="#2f6fc0" stroke-width="0.7" fill-rule="evenodd"/><path d="M11.40 7.40L12.70 7.64L12.55 8.77L11.23 8.67L10.74 9.85L11.74 10.71L11.05 11.61L9.96 10.86L8.95 11.64L9.39 12.89L8.34 13.32L7.77 12.13L6.50 12.30L6.26 13.60L5.13 13.45L5.23 12.13L4.05 11.64L3.19 12.64L2.29 11.95L3.04 10.86L2.26 9.85L1.01 10.29L0.58 9.24L1.77 8.67L1.60 7.40L0.30 7.16L0.45 6.03L1.77 6.13L2.26 4.95L1.26 4.09L1.95 3.19L3.04 3.94L4.05 3.16L3.61 1.91L4.66 1.48L5.23 2.67L6.50 2.50L6.74 1.20L7.87 1.35L7.77 2.67L8.95 3.16L9.81 2.16L10.71 2.85L9.96 3.94L10.74 4.95L11.99 4.51L12.42 5.56L11.23 6.13ZM8.70 7.40A2.2 2.2 0 1 0 4.30 7.40A2.2 2.2 0 1 0 8.70 7.40Z" fill="#a9cdf2" stroke="#2f6fc0" stroke-width="0.7" fill-rule="evenodd"/><circle cx="6.5" cy="7.4" r="3.4" fill="none" stroke="#e8f5fc" stroke-width="1.2"/></svg>
<div class="t rc" style="left:359.2px;top:260.6px;color:#fff;-webkit-text-stroke:0;width:167.4px;overflow:hidden">SSDP-Suche</div>
<div class="t rc" style="left:519.6px;top:260.6px;color:#fff;-webkit-text-stroke:0;width:95.7px;overflow:hidden">Sucht nach N...</div>
<div class="t rc" style="left:614px;top:260.6px;color:#fff;-webkit-text-stroke:0;width:60.9px;overflow:hidden">Wird au...</div>
<div class="t rc" style="left:676px;top:260.6px;color:#fff;-webkit-text-stroke:0;width:63.0px;overflow:hidden">Manuell</div>
<div class="t rc" style="left:739.4px;top:260.6px;color:#fff;-webkit-text-stroke:0;width:37.0px;overflow:hidden">Lokale</div>
<svg class="a" style="left:342px;top:277.0px" width="16" height="17" viewBox="0 0 16 17"><path d="M14.50 12.80L15.29 12.98L15.13 13.82L14.32 13.68L13.83 14.43L14.26 15.12L13.55 15.59L13.08 14.92L12.20 15.10L12.02 15.89L11.18 15.73L11.32 14.92L10.57 14.43L9.88 14.86L9.41 14.15L10.08 13.68L9.90 12.80L9.11 12.62L9.27 11.78L10.08 11.92L10.57 11.17L10.14 10.48L10.85 10.01L11.32 10.68L12.20 10.50L12.38 9.71L13.22 9.87L13.08 10.68L13.83 11.17L14.52 10.74L14.99 11.45L14.32 11.92ZM13.20 12.80A1.0 1.0 0 1 0 11.20 12.80A1.0 1.0 0 1 0 13.20 12.80Z" fill="#cce8f7" stroke="#86a3c0" stroke-width="0.7" fill-rule="evenodd"/><path d="M11.40 7.40L12.70 7.64L12.55 8.77L11.23 8.67L10.74 9.85L11.74 10.71L11.05 11.61L9.96 10.86L8.95 11.64L9.39 12.89L8.34 13.32L7.77 12.13L6.50 12.30L6.26 13.60L5.13 13.45L5.23 12.13L4.05 11.64L3.19 12.64L2.29 11.95L3.04 10.86L2.26 9.85L1.01 10.29L0.58 9.24L1.77 8.67L1.60 7.40L0.30 7.16L0.45 6.03L1.77 6.13L2.26 4.95L1.26 4.09L1.95 3.19L3.04 3.94L4.05 3.16L3.61 1.91L4.66 1.48L5.23 2.67L6.50 2.50L6.74 1.20L7.87 1.35L7.77 2.67L8.95 3.16L9.81 2.16L10.71 2.85L9.96 3.94L10.74 4.95L11.99 4.51L12.42 5.56L11.23 6.13ZM8.70 7.40A2.2 2.2 0 1 0 4.30 7.40A2.2 2.2 0 1 0 8.70 7.40Z" fill="#cce8f7" stroke="#86a3c0" stroke-width="0.7" fill-rule="evenodd"/><circle cx="6.5" cy="7.4" r="3.4" fill="none" stroke="#e8f5fc" stroke-width="1.2"/></svg>
<div class="t rc" style="left:359.2px;top:279.2px;color:#000;width:167.4px;overflow:hidden">SSTP-Dienst</div>
<div class="t rc" style="left:519.6px;top:279.2px;color:#000;width:95.7px;overflow:hidden">Bietet Unterst...</div>
<div class="t rc" style="left:676px;top:279.2px;color:#000;width:63.0px;overflow:hidden">Manuell</div>
<div class="t rc" style="left:739.4px;top:279.2px;color:#000;width:37.0px;overflow:hidden">Lokale</div>
<svg class="a" style="left:342px;top:295.6px" width="16" height="17" viewBox="0 0 16 17"><path d="M14.50 12.80L15.29 12.98L15.13 13.82L14.32 13.68L13.83 14.43L14.26 15.12L13.55 15.59L13.08 14.92L12.20 15.10L12.02 15.89L11.18 15.73L11.32 14.92L10.57 14.43L9.88 14.86L9.41 14.15L10.08 13.68L9.90 12.80L9.11 12.62L9.27 11.78L10.08 11.92L10.57 11.17L10.14 10.48L10.85 10.01L11.32 10.68L12.20 10.50L12.38 9.71L13.22 9.87L13.08 10.68L13.83 11.17L14.52 10.74L14.99 11.45L14.32 11.92ZM13.20 12.80A1.0 1.0 0 1 0 11.20 12.80A1.0 1.0 0 1 0 13.20 12.80Z" fill="#cce8f7" stroke="#86a3c0" stroke-width="0.7" fill-rule="evenodd"/><path d="M11.40 7.40L12.70 7.64L12.55 8.77L11.23 8.67L10.74 9.85L11.74 10.71L11.05 11.61L9.96 10.86L8.95 11.64L9.39 12.89L8.34 13.32L7.77 12.13L6.50 12.30L6.26 13.60L5.13 13.45L5.23 12.13L4.05 11.64L3.19 12.64L2.29 11.95L3.04 10.86L2.26 9.85L1.01 10.29L0.58 9.24L1.77 8.67L1.60 7.40L0.30 7.16L0.45 6.03L1.77 6.13L2.26 4.95L1.26 4.09L1.95 3.19L3.04 3.94L4.05 3.16L3.61 1.91L4.66 1.48L5.23 2.67L6.50 2.50L6.74 1.20L7.87 1.35L7.77 2.67L8.95 3.16L9.81 2.16L10.71 2.85L9.96 3.94L10.74 4.95L11.99 4.51L12.42 5.56L11.23 6.13ZM8.70 7.40A2.2 2.2 0 1 0 4.30 7.40A2.2 2.2 0 1 0 8.70 7.40Z" fill="#cce8f7" stroke="#86a3c0" stroke-width="0.7" fill-rule="evenodd"/><circle cx="6.5" cy="7.4" r="3.4" fill="none" stroke="#e8f5fc" stroke-width="1.2"/></svg>
<div class="t rc" style="left:359.2px;top:297.8px;color:#000;width:167.4px;overflow:hidden">Stromversorgung</div>
<div class="t rc" style="left:519.6px;top:297.8px;color:#000;width:95.7px;overflow:hidden">Verwaltet die ...</div>
<div class="t rc" style="left:614px;top:297.8px;color:#000;width:60.9px;overflow:hidden">Wird au...</div>
<div class="t rc" style="left:676px;top:297.8px;color:#000;width:63.0px;overflow:hidden">Automa...</div>
<div class="t rc" style="left:739.4px;top:297.8px;color:#000;width:37.0px;overflow:hidden">Lokale</div>
<svg class="a" style="left:342px;top:314.20000000000005px" width="16" height="17" viewBox="0 0 16 17"><path d="M14.50 12.80L15.29 12.98L15.13 13.82L14.32 13.68L13.83 14.43L14.26 15.12L13.55 15.59L13.08 14.92L12.20 15.10L12.02 15.89L11.18 15.73L11.32 14.92L10.57 14.43L9.88 14.86L9.41 14.15L10.08 13.68L9.90 12.80L9.11 12.62L9.27 11.78L10.08 11.92L10.57 11.17L10.14 10.48L10.85 10.01L11.32 10.68L12.20 10.50L12.38 9.71L13.22 9.87L13.08 10.68L13.83 11.17L14.52 10.74L14.99 11.45L14.32 11.92ZM13.20 12.80A1.0 1.0 0 1 0 11.20 12.80A1.0 1.0 0 1 0 13.20 12.80Z" fill="#cce8f7" stroke="#86a3c0" stroke-width="0.7" fill-rule="evenodd"/><path d="M11.40 7.40L12.70 7.64L12.55 8.77L11.23 8.67L10.74 9.85L11.74 10.71L11.05 11.61L9.96 10.86L8.95 11.64L9.39 12.89L8.34 13.32L7.77 12.13L6.50 12.30L6.26 13.60L5.13 13.45L5.23 12.13L4.05 11.64L3.19 12.64L2.29 11.95L3.04 10.86L2.26 9.85L1.01 10.29L0.58 9.24L1.77 8.67L1.60 7.40L0.30 7.16L0.45 6.03L1.77 6.13L2.26 4.95L1.26 4.09L1.95 3.19L3.04 3.94L4.05 3.16L3.61 1.91L4.66 1.48L5.23 2.67L6.50 2.50L6.74 1.20L7.87 1.35L7.77 2.67L8.95 3.16L9.81 2.16L10.71 2.85L9.96 3.94L10.74 4.95L11.99 4.51L12.42 5.56L11.23 6.13ZM8.70 7.40A2.2 2.2 0 1 0 4.30 7.40A2.2 2.2 0 1 0 8.70 7.40Z" fill="#cce8f7" stroke="#86a3c0" stroke-width="0.7" fill-rule="evenodd"/><circle cx="6.5" cy="7.4" r="3.4" fill="none" stroke="#e8f5fc" stroke-width="1.2"/></svg>
<div class="t rc" style="left:359.2px;top:316.4px;color:#000;width:167.4px;overflow:hidden">Superfetch</div>
<div class="t rc" style="left:519.6px;top:316.4px;color:#000;width:95.7px;overflow:hidden">Verwaltet und...</div>
<div class="t rc" style="left:614px;top:316.4px;color:#000;width:60.9px;overflow:hidden">Wird au...</div>
<div class="t rc" style="left:676px;top:316.4px;color:#000;width:63.0px;overflow:hidden">Automa...</div>
<div class="t rc" style="left:739.4px;top:316.4px;color:#000;width:37.0px;overflow:hidden">Lokale</div>
<svg class="a" style="left:342px;top:332.8px" width="16" height="17" viewBox="0 0 16 17"><path d="M14.50 12.80L15.29 12.98L15.13 13.82L14.32 13.68L13.83 14.43L14.26 15.12L13.55 15.59L13.08 14.92L12.20 15.10L12.02 15.89L11.18 15.73L11.32 14.92L10.57 14.43L9.88 14.86L9.41 14.15L10.08 13.68L9.90 12.80L9.11 12.62L9.27 11.78L10.08 11.92L10.57 11.17L10.14 10.48L10.85 10.01L11.32 10.68L12.20 10.50L12.38 9.71L13.22 9.87L13.08 10.68L13.83 11.17L14.52 10.74L14.99 11.45L14.32 11.92ZM13.20 12.80A1.0 1.0 0 1 0 11.20 12.80A1.0 1.0 0 1 0 13.20 12.80Z" fill="#cce8f7" stroke="#86a3c0" stroke-width="0.7" fill-rule="evenodd"/><path d="M11.40 7.40L12.70 7.64L12.55 8.77L11.23 8.67L10.74 9.85L11.74 10.71L11.05 11.61L9.96 10.86L8.95 11.64L9.39 12.89L8.34 13.32L7.77 12.13L6.50 12.30L6.26 13.60L5.13 13.45L5.23 12.13L4.05 11.64L3.19 12.64L2.29 11.95L3.04 10.86L2.26 9.85L1.01 10.29L0.58 9.24L1.77 8.67L1.60 7.40L0.30 7.16L0.45 6.03L1.77 6.13L2.26 4.95L1.26 4.09L1.95 3.19L3.04 3.94L4.05 3.16L3.61 1.91L4.66 1.48L5.23 2.67L6.50 2.50L6.74 1.20L7.87 1.35L7.77 2.67L8.95 3.16L9.81 2.16L10.71 2.85L9.96 3.94L10.74 4.95L11.99 4.51L12.42 5.56L11.23 6.13ZM8.70 7.40A2.2 2.2 0 1 0 4.30 7.40A2.2 2.2 0 1 0 8.70 7.40Z" fill="#cce8f7" stroke="#86a3c0" stroke-width="0.7" fill-rule="evenodd"/><circle cx="6.5" cy="7.4" r="3.4" fill="none" stroke="#e8f5fc" stroke-width="1.2"/></svg>
<div class="t rc" style="left:359.2px;top:335.0px;color:#000;width:167.4px;overflow:hidden">Systemereignisse-Broker</div>
<div class="t rc" style="left:519.6px;top:335.0px;color:#000;width:95.7px;overflow:hidden">Koordiniert di...</div>
<div class="t rc" style="left:614px;top:335.0px;color:#000;width:60.9px;overflow:hidden">Wird au...</div>
<div class="t rc" style="left:676px;top:335.0px;color:#000;width:63.0px;overflow:hidden">Manuell...</div>
<div class="t rc" style="left:739.4px;top:335.0px;color:#000;width:37.0px;overflow:hidden">Lokale</div>
<svg class="a" style="left:342px;top:351.40000000000003px" width="16" height="17" viewBox="0 0 16 17"><path d="M14.50 12.80L15.29 12.98L15.13 13.82L14.32 13.68L13.83 14.43L14.26 15.12L13.55 15.59L13.08 14.92L12.20 15.10L12.02 15.89L11.18 15.73L11.32 14.92L10.57 14.43L9.88 14.86L9.41 14.15L10.08 13.68L9.90 12.80L9.11 12.62L9.27 11.78L10.08 11.92L10.57 11.17L10.14 10.48L10.85 10.01L11.32 10.68L12.20 10.50L12.38 9.71L13.22 9.87L13.08 10.68L13.83 11.17L14.52 10.74L14.99 11.45L14.32 11.92ZM13.20 12.80A1.0 1.0 0 1 0 11.20 12.80A1.0 1.0 0 1 0 13.20 12.80Z" fill="#cce8f7" stroke="#86a3c0" stroke-width="0.7" fill-rule="evenodd"/><path d="M11.40 7.40L12.70 7.64L12.55 8.77L11.23 8.67L10.74 9.85L11.74 10.71L11.05 11.61L9.96 10.86L8.95 11.64L9.39 12.89L8.34 13.32L7.77 12.13L6.50 12.30L6.26 13.60L5.13 13.45L5.23 12.13L4.05 11.64L3.19 12.64L2.29 11.95L3.04 10.86L2.26 9.85L1.01 10.29L0.58 9.24L1.77 8.67L1.60 7.40L0.30 7.16L0.45 6.03L1.77 6.13L2.26 4.95L1.26 4.09L1.95 3.19L3.04 3.94L4.05 3.16L3.61 1.91L4.66 1.48L5.23 2.67L6.50 2.50L6.74 1.20L7.87 1.35L7.77 2.67L8.95 3.16L9.81 2.16L10.71 2.85L9.96 3.94L10.74 4.95L11.99 4.51L12.42 5.56L11.23 6.13ZM8.70 7.40A2.2 2.2 0 1 0 4.30 7.40A2.2 2.2 0 1 0 8.70 7.40Z" fill="#cce8f7" stroke="#86a3c0" stroke-width="0.7" fill-rule="evenodd"/><circle cx="6.5" cy="7.4" r="3.4" fill="none" stroke="#e8f5fc" stroke-width="1.2"/></svg>
<div class="t rc" style="left:359.2px;top:353.6px;color:#000;width:167.4px;overflow:hidden">TCP/IP-NetBIOS-Hilfsdienst</div>
<div class="t rc" style="left:519.6px;top:353.6px;color:#000;width:95.7px;overflow:hidden">Bietet Unterst...</div>
<div class="t rc" style="left:614px;top:353.6px;color:#000;width:60.9px;overflow:hidden">Wird au...</div>
<div class="t rc" style="left:676px;top:353.6px;color:#000;width:63.0px;overflow:hidden">Automa...</div>
<div class="t rc" style="left:739.4px;top:353.6px;color:#000;width:37.0px;overflow:hidden">Lokale</div>
<svg class="a" style="left:342px;top:370.0px" width="16" height="17" viewBox="0 0 16 17"><path d="M14.50 12.80L15.29 12.98L15.13 13.82L14.32 13.68L13.83 14.43L14.26 15.12L13.55 15.59L13.08 14.92L12.20 15.10L12.02 15.89L11.18 15.73L11.32 14.92L10.57 14.43L9.88 14.86L9.41 14.15L10.08 13.68L9.90 12.80L9.11 12.62L9.27 11.78L10.08 11.92L10.57 11.17L10.14 10.48L10.85 10.01L11.32 10.68L12.20 10.50L12.38 9.71L13.22 9.87L13.08 10.68L13.83 11.17L14.52 10.74L14.99 11.45L14.32 11.92ZM13.20 12.80A1.0 1.0 0 1 0 11.20 12.80A1.0 1.0 0 1 0 13.20 12.80Z" fill="#cce8f7" stroke="#86a3c0" stroke-width="0.7" fill-rule="evenodd"/><path d="M11.40 7.40L12.70 7.64L12.55 8.77L11.23 8.67L10.74 9.85L11.74 10.71L11.05 11.61L9.96 10.86L8.95 11.64L9.39 12.89L8.34 13.32L7.77 12.13L6.50 12.30L6.26 13.60L5.13 13.45L5.23 12.13L4.05 11.64L3.19 12.64L2.29 11.95L3.04 10.86L2.26 9.85L1.01 10.29L0.58 9.24L1.77 8.67L1.60 7.40L0.30 7.16L0.45 6.03L1.77 6.13L2.26 4.95L1.26 4.09L1.95 3.19L3.04 3.94L4.05 3.16L3.61 1.91L4.66 1.48L5.23 2.67L6.50 2.50L6.74 1.20L7.87 1.35L7.77 2.67L8.95 3.16L9.81 2.16L10.71 2.85L9.96 3.94L10.74 4.95L11.99 4.51L12.42 5.56L11.23 6.13ZM8.70 7.40A2.2 2.2 0 1 0 4.30 7.40A2.2 2.2 0 1 0 8.70 7.40Z" fill="#cce8f7" stroke="#86a3c0" stroke-width="0.7" fill-rule="evenodd"/><circle cx="6.5" cy="7.4" r="3.4" fill="none" stroke="#e8f5fc" stroke-width="1.2"/></svg>
<div class="t rc" style="left:359.2px;top:372.2px;color:#000;width:167.4px;overflow:hidden">Telefonie</div>
<div class="t rc" style="left:519.6px;top:372.2px;color:#000;width:95.7px;overflow:hidden">Bietet Telefon...</div>
<div class="t rc" style="left:676px;top:372.2px;color:#000;width:63.0px;overflow:hidden">Manuell</div>
<div class="t rc" style="left:739.4px;top:372.2px;color:#000;width:37.0px;overflow:hidden">Netzw</div>
<svg class="a" style="left:342px;top:388.6px" width="16" height="17" viewBox="0 0 16 17"><path d="M14.50 12.80L15.29 12.98L15.13 13.82L14.32 13.68L13.83 14.43L14.26 15.12L13.55 15.59L13.08 14.92L12.20 15.10L12.02 15.89L11.18 15.73L11.32 14.92L10.57 14.43L9.88 14.86L9.41 14.15L10.08 13.68L9.90 12.80L9.11 12.62L9.27 11.78L10.08 11.92L10.57 11.17L10.14 10.48L10.85 10.01L11.32 10.68L12.20 10.50L12.38 9.71L13.22 9.87L13.08 10.68L13.83 11.17L14.52 10.74L14.99 11.45L14.32 11.92ZM13.20 12.80A1.0 1.0 0 1 0 11.20 12.80A1.0 1.0 0 1 0 13.20 12.80Z" fill="#cce8f7" stroke="#86a3c0" stroke-width="0.7" fill-rule="evenodd"/><path d="M11.40 7.40L12.70 7.64L12.55 8.77L11.23 8.67L10.74 9.85L11.74 10.71L11.05 11.61L9.96 10.86L8.95 11.64L9.39 12.89L8.34 13.32L7.77 12.13L6.50 12.30L6.26 13.60L5.13 13.45L5.23 12.13L4.05 11.64L3.19 12.64L2.29 11.95L3.04 10.86L2.26 9.85L1.01 10.29L0.58 9.24L1.77 8.67L1.60 7.40L0.30 7.16L0.45 6.03L1.77 6.13L2.26 4.95L1.26 4.09L1.95 3.19L3.04 3.94L4.05 3.16L3.61 1.91L4.66 1.48L5.23 2.67L6.50 2.50L6.74 1.20L7.87 1.35L7.77 2.67L8.95 3.16L9.81 2.16L10.71 2.85L9.96 3.94L10.74 4.95L11.99 4.51L12.42 5.56L11.23 6.13ZM8.70 7.40A2.2 2.2 0 1 0 4.30 7.40A2.2 2.2 0 1 0 8.70 7.40Z" fill="#cce8f7" stroke="#86a3c0" stroke-width="0.7" fill-rule="evenodd"/><circle cx="6.5" cy="7.4" r="3.4" fill="none" stroke="#e8f5fc" stroke-width="1.2"/></svg>
<div class="t rc" style="left:359.2px;top:390.8px;color:#000;width:167.4px;overflow:hidden">Überwachung verfügbarer...</div>
<div class="t rc" style="left:519.6px;top:390.8px;color:#000;width:95.7px;overflow:hidden">Überwacht di...</div>
<div class="t rc" style="left:614px;top:390.8px;color:#000;width:60.9px;overflow:hidden">Wird au...</div>
<div class="t rc" style="left:676px;top:390.8px;color:#000;width:63.0px;overflow:hidden">Automa...</div>
<div class="t rc" style="left:739.4px;top:390.8px;color:#000;width:37.0px;overflow:hidden">Lokale</div>
<svg class="a" style="left:342px;top:407.20000000000005px" width="16" height="17" viewBox="0 0 16 17"><path d="M14.50 12.80L15.29 12.98L15.13 13.82L14.32 13.68L13.83 14.43L14.26 15.12L13.55 15.59L13.08 14.92L12.20 15.10L12.02 15.89L11.18 15.73L11.32 14.92L10.57 14.43L9.88 14.86L9.41 14.15L10.08 13.68L9.90 12.80L9.11 12.62L9.27 11.78L10.08 11.92L10.57 11.17L10.14 10.48L10.85 10.01L11.32 10.68L12.20 10.50L12.38 9.71L13.22 9.87L13.08 10.68L13.83 11.17L14.52 10.74L14.99 11.45L14.32 11.92ZM13.20 12.80A1.0 1.0 0 1 0 11.20 12.80A1.0 1.0 0 1 0 13.20 12.80Z" fill="#cce8f7" stroke="#86a3c0" stroke-width="0.7" fill-rule="evenodd"/><path d="M11.40 7.40L12.70 7.64L12.55 8.77L11.23 8.67L10.74 9.85L11.74 10.71L11.05 11.61L9.96 10.86L8.95 11.64L9.39 12.89L8.34 13.32L7.77 12.13L6.50 12.30L6.26 13.60L5.13 13.45L5.23 12.13L4.05 11.64L3.19 12.64L2.29 11.95L3.04 10.86L2.26 9.85L1.01 10.29L0.58 9.24L1.77 8.67L1.60 7.40L0.30 7.16L0.45 6.03L1.77 6.13L2.26 4.95L1.26 4.09L1.95 3.19L3.04 3.94L4.05 3.16L3.61 1.91L4.66 1.48L5.23 2.67L6.50 2.50L6.74 1.20L7.87 1.35L7.77 2.67L8.95 3.16L9.81 2.16L10.71 2.85L9.96 3.94L10.74 4.95L11.99 4.51L12.42 5.56L11.23 6.13ZM8.70 7.40A2.2 2.2 0 1 0 4.30 7.40A2.2 2.2 0 1 0 8.70 7.40Z" fill="#cce8f7" stroke="#86a3c0" stroke-width="0.7" fill-rule="evenodd"/><circle cx="6.5" cy="7.4" r="3.4" fill="none" stroke="#e8f5fc" stroke-width="1.2"/></svg>
<div class="t rc" style="left:359.2px;top:409.4px;color:#000;width:167.4px;overflow:hidden">Unterstützung in der Syste...</div>
<div class="t rc" style="left:519.6px;top:409.4px;color:#000;width:95.7px;overflow:hidden">Dieser Dienst...</div>
<div class="t rc" style="left:676px;top:409.4px;color:#000;width:63.0px;overflow:hidden">Manuell</div>
<div class="t rc" style="left:739.4px;top:409.4px;color:#000;width:37.0px;overflow:hidden">Lokale</div>
<svg class="a" style="left:342px;top:425.8px" width="16" height="17" viewBox="0 0 16 17"><path d="M14.50 12.80L15.29 12.98L15.13 13.82L14.32 13.68L13.83 14.43L14.26 15.12L13.55 15.59L13.08 14.92L12.20 15.10L12.02 15.89L11.18 15.73L11.32 14.92L10.57 14.43L9.88 14.86L9.41 14.15L10.08 13.68L9.90 12.80L9.11 12.62L9.27 11.78L10.08 11.92L10.57 11.17L10.14 10.48L10.85 10.01L11.32 10.68L12.20 10.50L12.38 9.71L13.22 9.87L13.08 10.68L13.83 11.17L14.52 10.74L14.99 11.45L14.32 11.92ZM13.20 12.80A1.0 1.0 0 1 0 11.20 12.80A1.0 1.0 0 1 0 13.20 12.80Z" fill="#cce8f7" stroke="#86a3c0" stroke-width="0.7" fill-rule="evenodd"/><path d="M11.40 7.40L12.70 7.64L12.55 8.77L11.23 8.67L10.74 9.85L11.74 10.71L11.05 11.61L9.96 10.86L8.95 11.64L9.39 12.89L8.34 13.32L7.77 12.13L6.50 12.30L6.26 13.60L5.13 13.45L5.23 12.13L4.05 11.64L3.19 12.64L2.29 11.95L3.04 10.86L2.26 9.85L1.01 10.29L0.58 9.24L1.77 8.67L1.60 7.40L0.30 7.16L0.45 6.03L1.77 6.13L2.26 4.95L1.26 4.09L1.95 3.19L3.04 3.94L4.05 3.16L3.61 1.91L4.66 1.48L5.23 2.67L6.50 2.50L6.74 1.20L7.87 1.35L7.77 2.67L8.95 3.16L9.81 2.16L10.71 2.85L9.96 3.94L10.74 4.95L11.99 4.51L12.42 5.56L11.23 6.13ZM8.70 7.40A2.2 2.2 0 1 0 4.30 7.40A2.2 2.2 0 1 0 8.70 7.40Z" fill="#cce8f7" stroke="#86a3c0" stroke-width="0.7" fill-rule="evenodd"/><circle cx="6.5" cy="7.4" r="3.4" fill="none" stroke="#e8f5fc" stroke-width="1.2"/></svg>
<div class="t rc" style="left:359.2px;top:428.0px;color:#000;width:167.4px;overflow:hidden">UPnP-Gerätehost</div>
<div class="t rc" style="left:519.6px;top:428.0px;color:#000;width:95.7px;overflow:hidden">Ermöglicht da...</div>
<div class="t rc" style="left:676px;top:428.0px;color:#000;width:63.0px;overflow:hidden">Deaktivi...</div>
<div class="t rc" style="left:739.4px;top:428.0px;color:#000;width:37.0px;overflow:hidden">Lokale</div>
<svg class="a" style="left:342px;top:444.40000000000003px" width="16" height="17" viewBox="0 0 16 17"><path d="M14.50 12.80L15.29 12.98L15.13 13.82L14.32 13.68L13.83 14.43L14.26 15.12L13.55 15.59L13.08 14.92L12.20 15.10L12.02 15.89L11.18 15.73L11.32 14.92L10.57 14.43L9.88 14.86L9.41 14.15L10.08 13.68L9.90 12.80L9.11 12.62L9.27 11.78L10.08 11.92L10.57 11.17L10.14 10.48L10.85 10.01L11.32 10.68L12.20 10.50L12.38 9.71L13.22 9.87L13.08 10.68L13.83 11.17L14.52 10.74L14.99 11.45L14.32 11.92ZM13.20 12.80A1.0 1.0 0 1 0 11.20 12.80A1.0 1.0 0 1 0 13.20 12.80Z" fill="#cce8f7" stroke="#86a3c0" stroke-width="0.7" fill-rule="evenodd"/><path d="M11.40 7.40L12.70 7.64L12.55 8.77L11.23 8.67L10.74 9.85L11.74 10.71L11.05 11.61L9.96 10.86L8.95 11.64L9.39 12.89L8.34 13.32L7.77 12.13L6.50 12.30L6.26 13.60L5.13 13.45L5.23 12.13L4.05 11.64L3.19 12.64L2.29 11.95L3.04 10.86L2.26 9.85L1.01 10.29L0.58 9.24L1.77 8.67L1.60 7.40L0.30 7.16L0.45 6.03L1.77 6.13L2.26 4.95L1.26 4.09L1.95 3.19L3.04 3.94L4.05 3.16L3.61 1.91L4.66 1.48L5.23 2.67L6.50 2.50L6.74 1.20L7.87 1.35L7.77 2.67L8.95 3.16L9.81 2.16L10.71 2.85L9.96 3.94L10.74 4.95L11.99 4.51L12.42 5.56L11.23 6.13ZM8.70 7.40A2.2 2.2 0 1 0 4.30 7.40A2.2 2.2 0 1 0 8.70 7.40Z" fill="#cce8f7" stroke="#86a3c0" stroke-width="0.7" fill-rule="evenodd"/><circle cx="6.5" cy="7.4" r="3.4" fill="none" stroke="#e8f5fc" stroke-width="1.2"/></svg>
<div class="t rc" style="left:359.2px;top:446.6px;color:#000;width:167.4px;overflow:hidden">Verbessertes Windows-Au...</div>
<div class="t rc" style="left:519.6px;top:446.6px;color:#000;width:95.7px;overflow:hidden">Ermöglicht di...</div>
<div class="t rc" style="left:676px;top:446.6px;color:#000;width:63.0px;overflow:hidden">Manuell</div>
<div class="t rc" style="left:739.4px;top:446.6px;color:#000;width:37.0px;overflow:hidden">Lokale</div>
<svg class="a" style="left:342px;top:463.00000000000006px" width="16" height="17" viewBox="0 0 16 17"><path d="M14.50 12.80L15.29 12.98L15.13 13.82L14.32 13.68L13.83 14.43L14.26 15.12L13.55 15.59L13.08 14.92L12.20 15.10L12.02 15.89L11.18 15.73L11.32 14.92L10.57 14.43L9.88 14.86L9.41 14.15L10.08 13.68L9.90 12.80L9.11 12.62L9.27 11.78L10.08 11.92L10.57 11.17L10.14 10.48L10.85 10.01L11.32 10.68L12.20 10.50L12.38 9.71L13.22 9.87L13.08 10.68L13.83 11.17L14.52 10.74L14.99 11.45L14.32 11.92ZM13.20 12.80A1.0 1.0 0 1 0 11.20 12.80A1.0 1.0 0 1 0 13.20 12.80Z" fill="#cce8f7" stroke="#86a3c0" stroke-width="0.7" fill-rule="evenodd"/><path d="M11.40 7.40L12.70 7.64L12.55 8.77L11.23 8.67L10.74 9.85L11.74 10.71L11.05 11.61L9.96 10.86L8.95 11.64L9.39 12.89L8.34 13.32L7.77 12.13L6.50 12.30L6.26 13.60L5.13 13.45L5.23 12.13L4.05 11.64L3.19 12.64L2.29 11.95L3.04 10.86L2.26 9.85L1.01 10.29L0.58 9.24L1.77 8.67L1.60 7.40L0.30 7.16L0.45 6.03L1.77 6.13L2.26 4.95L1.26 4.09L1.95 3.19L3.04 3.94L4.05 3.16L3.61 1.91L4.66 1.48L5.23 2.67L6.50 2.50L6.74 1.20L7.87 1.35L7.77 2.67L8.95 3.16L9.81 2.16L10.71 2.85L9.96 3.94L10.74 4.95L11.99 4.51L12.42 5.56L11.23 6.13ZM8.70 7.40A2.2 2.2 0 1 0 4.30 7.40A2.2 2.2 0 1 0 8.70 7.40Z" fill="#cce8f7" stroke="#86a3c0" stroke-width="0.7" fill-rule="evenodd"/><circle cx="6.5" cy="7.4" r="3.4" fill="none" stroke="#e8f5fc" stroke-width="1.2"/></svg>
<div class="t rc" style="left:359.2px;top:465.2px;color:#000;width:167.4px;overflow:hidden">Verbindungsschicht-Topolo...</div>
<div class="t rc" style="left:519.6px;top:465.2px;color:#000;width:95.7px;overflow:hidden">Erstellt eine ...</div>
<div class="t rc" style="left:676px;top:465.2px;color:#000;width:63.0px;overflow:hidden">Manuell</div>
<div class="t rc" style="left:739.4px;top:465.2px;color:#000;width:37.0px;overflow:hidden">Lokale</div>
<svg class="a" style="left:342px;top:481.6px" width="16" height="17" viewBox="0 0 16 17"><path d="M14.50 12.80L15.29 12.98L15.13 13.82L14.32 13.68L13.83 14.43L14.26 15.12L13.55 15.59L13.08 14.92L12.20 15.10L12.02 15.89L11.18 15.73L11.32 14.92L10.57 14.43L9.88 14.86L9.41 14.15L10.08 13.68L9.90 12.80L9.11 12.62L9.27 11.78L10.08 11.92L10.57 11.17L10.14 10.48L10.85 10.01L11.32 10.68L12.20 10.50L12.38 9.71L13.22 9.87L13.08 10.68L13.83 11.17L14.52 10.74L14.99 11.45L14.32 11.92ZM13.20 12.80A1.0 1.0 0 1 0 11.20 12.80A1.0 1.0 0 1 0 13.20 12.80Z" fill="#cce8f7" stroke="#86a3c0" stroke-width="0.7" fill-rule="evenodd"/><path d="M11.40 7.40L12.70 7.64L12.55 8.77L11.23 8.67L10.74 9.85L11.74 10.71L11.05 11.61L9.96 10.86L8.95 11.64L9.39 12.89L8.34 13.32L7.77 12.13L6.50 12.30L6.26 13.60L5.13 13.45L5.23 12.13L4.05 11.64L3.19 12.64L2.29 11.95L3.04 10.86L2.26 9.85L1.01 10.29L0.58 9.24L1.77 8.67L1.60 7.40L0.30 7.16L0.45 6.03L1.77 6.13L2.26 4.95L1.26 4.09L1.95 3.19L3.04 3.94L4.05 3.16L3.61 1.91L4.66 1.48L5.23 2.67L6.50 2.50L6.74 1.20L7.87 1.35L7.77 2.67L8.95 3.16L9.81 2.16L10.71 2.85L9.96 3.94L10.74 4.95L11.99 4.51L12.42 5.56L11.23 6.13ZM8.70 7.40A2.2 2.2 0 1 0 4.30 7.40A2.2 2.2 0 1 0 8.70 7.40Z" fill="#cce8f7" stroke="#86a3c0" stroke-width="0.7" fill-rule="evenodd"/><circle cx="6.5" cy="7.4" r="3.4" fill="none" stroke="#e8f5fc" stroke-width="1.2"/></svg>
<div class="t rc" style="left:359.2px;top:483.8px;color:#000;width:167.4px;overflow:hidden">Verschlüsselndes Dateisystem</div>
<div class="t rc" style="left:519.6px;top:483.8px;color:#000;width:95.7px;overflow:hidden">Stellt die Kernte...</div>
<div class="t rc" style="left:676px;top:483.8px;color:#000;width:63.0px;overflow:hidden">Manuell...</div>
<div class="t rc" style="left:739.4px;top:483.8px;color:#000;width:37.0px;overflow:hidden">Lokale</div>
<svg class="a" style="left:342px;top:500.20000000000005px" width="16" height="17" viewBox="0 0 16 17"><path d="M14.50 12.80L15.29 12.98L15.13 13.82L14.32 13.68L13.83 14.43L14.26 15.12L13.55 15.59L13.08 14.92L12.20 15.10L12.02 15.89L11.18 15.73L11.32 14.92L10.57 14.43L9.88 14.86L9.41 14.15L10.08 13.68L9.90 12.80L9.11 12.62L9.27 11.78L10.08 11.92L10.57 11.17L10.14 10.48L10.85 10.01L11.32 10.68L12.20 10.50L12.38 9.71L13.22 9.87L13.08 10.68L13.83 11.17L14.52 10.74L14.99 11.45L14.32 11.92ZM13.20 12.80A1.0 1.0 0 1 0 11.20 12.80A1.0 1.0 0 1 0 13.20 12.80Z" fill="#cce8f7" stroke="#86a3c0" stroke-width="0.7" fill-rule="evenodd"/><path d="M11.40 7.40L12.70 7.64L12.55 8.77L11.23 8.67L10.74 9.85L11.74 10.71L11.05 11.61L9.96 10.86L8.95 11.64L9.39 12.89L8.34 13.32L7.77 12.13L6.50 12.30L6.26 13.60L5.13 13.45L5.23 12.13L4.05 11.64L3.19 12.64L2.29 11.95L3.04 10.86L2.26 9.85L1.01 10.29L0.58 9.24L1.77 8.67L1.60 7.40L0.30 7.16L0.45 6.03L1.77 6.13L2.26 4.95L1.26 4.09L1.95 3.19L3.04 3.94L4.05 3.16L3.61 1.91L4.66 1.48L5.23 2.67L6.50 2.50L6.74 1.20L7.87 1.35L7.77 2.67L8.95 3.16L9.81 2.16L10.71 2.85L9.96 3.94L10.74 4.95L11.99 4.51L12.42 5.56L11.23 6.13ZM8.70 7.40A2.2 2.2 0 1 0 4.30 7.40A2.2 2.2 0 1 0 8.70 7.40Z" fill="#cce8f7" stroke="#86a3c0" stroke-width="0.7" fill-rule="evenodd"/><circle cx="6.5" cy="7.4" r="3.4" fill="none" stroke="#e8f5fc" stroke-width="1.2"/></svg>
<div class="t rc" style="left:359.2px;top:502.4px;color:#000;width:167.4px;overflow:hidden">Verwaltung für automatisch...</div>
<div class="t rc" style="left:519.6px;top:502.4px;color:#000;width:95.7px;overflow:hidden">Erstellt eine Ve...</div>
<div class="t rc" style="left:676px;top:502.4px;color:#000;width:63.0px;overflow:hidden">Manuell</div>
<div class="t rc" style="left:739.4px;top:502.4px;color:#000;width:37.0px;overflow:hidden">Lokale</div>

<!-- scrollbar -->
<div id="sb" class="a"></div>
<div id="thumb" class="a"></div>
<svg class="a" style="left:776px;top:127px" width="12" height="9" viewBox="0 0 12 9"><path d="M2.4 6.6L5.9 3.1L9.4 6.6" fill="none" stroke="#606060" stroke-width="1.6"/></svg>
<svg class="a" style="left:776px;top:505px" width="12" height="8" viewBox="0 0 12 8"><path d="M2.6 2.6L5.9 5.9L9.2 2.6" fill="none" stroke="#606060" stroke-width="1.5"/></svg>

<!-- context menu -->
<div id="ctx" class="a"></div>
<div class="a" style="left:477px;top:268px;width:1px;height:221px;background:#dcdcdc"></div>
<div class="a" style="left:478px;top:268px;width:1px;height:221px;background:#fff"></div>
<div class="t ci dis" style="top:272px">Starten</div>
<div class="t ci" style="top:293.5px">Beenden</div>
<div class="t ci dis" style="top:315px">Anhalten</div>
<div class="t ci dis" style="top:336.5px">Fortsetzen</div>
<div class="t ci" style="top:358px">Neu starten</div>
<div class="a msep" style="top:379px"></div>
<div class="t ci" style="top:386.5px">Alle Aufgaben</div>
<svg class="a" style="left:595px;top:389px" width="5" height="8" viewBox="0 0 5 8"><path d="M0.5 0.5L4.5 4L0.5 7.5Z" fill="#222"/></svg>
<div class="a msep" style="top:408px"></div>
<div class="t ci" style="top:415px">Aktualisieren</div>
<div class="a msep" style="top:436px"></div>
<div class="a" style="left:450px;top:440px;width:159px;height:21px;background:#d5e2f4;border:1px solid #a3c3ec"></div>
<div class="t ci" style="top:442.6px;font-weight:bold;font-size:12px;transform-origin:0 0;transform:scaleX(0.925)">Eigenschaften</div>
<div class="a msep" style="top:464px"></div>
<div class="t ci" style="top:471px">Hilfe</div>
<svg class="a" style="left:569px;top:455px" width="15" height="21" viewBox="0 0 15 21"><path d="M1.5 1.5L1.5 16L5.1 12.8L8 19L10.4 18L7.6 11.9L12.3 11.9Z" fill="#fff" stroke="#4a4a4a" stroke-width="1" stroke-linejoin="round"/></svg>

</body></html>
